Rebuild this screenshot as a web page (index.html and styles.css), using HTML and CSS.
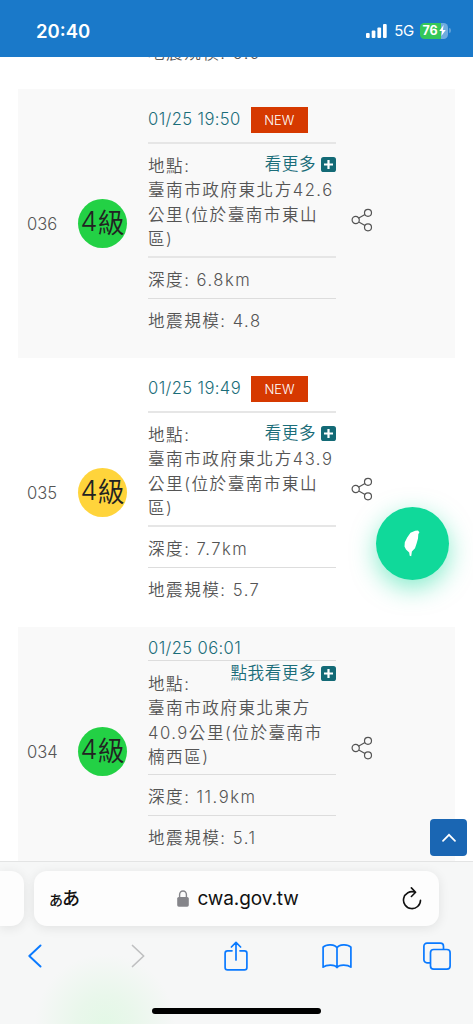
FILE: index.html
```html
<!DOCTYPE html>
<html lang="zh-Hant">
<head>
<meta charset="utf-8">
<title>cwa.gov.tw</title>
<link rel="stylesheet" href="styles.css">
</head>
<body>
<svg width="0" height="0" class="defs">
  <symbol id="plus" viewBox="0 0 15 15"><rect width="15" height="15" rx="2.6" fill="#136a76"/><path d="M7.5 3v9M3 7.5h9" stroke="#fff" stroke-width="2.2"/></symbol>
  <symbol id="share" viewBox="0 0 22 24"><g fill="none" stroke="#555" stroke-width="1.2"><circle cx="4.7" cy="12" r="3.6"/><circle cx="17" cy="4.8" r="3.5"/><circle cx="17" cy="19.3" r="3.5"/><path d="M7.8 10.1l6.2-3.6M7.8 13.9l6.2 3.6"/></g></symbol>
</svg>
<div class="screen">
  <header class="status">
    <span class="clock">20:40</span>
    <div class="indicators">
      <svg class="signal" width="21" height="14" viewBox="0 0 21 14" fill="#fff"><rect x="0" y="9" width="3.7" height="5" rx="1"/><rect x="5.7" y="6.5" width="3.7" height="7.5" rx="1"/><rect x="11.4" y="3.6" width="3.7" height="10.4" rx="1"/><rect x="17" y="0" width="3.7" height="14" rx="1"/></svg>
      <span class="network">5G</span>
      <div class="battery"><span>76</span><svg width="7" height="11" viewBox="0 0 7 11"><path d="M4.6 0L.3 6h2.8L2.4 11 6.7 4.9H3.9z" fill="#fff"/></svg></div>
      <i class="cap"></i>
    </div>
  </header>

  <main class="list">
    <div class="tail"><p>地震規模: <b>5.9</b></p></div>

    <section class="quake shaded">
      <span class="no">036</span>
      <span class="level green"><b>4</b>級</span>
      <div class="detail">
        <div class="date"><span>01/25 19:50</span><em>NEW</em></div>
        <div class="place">
          <div class="head"><span>地點:</span><a class="more">看更多<svg width="15" height="15"><use href="#plus"/></svg></a></div>
          臺南市政府東北方<b>42.6</b><br>公里(位於臺南市東山<br>區)
        </div>
        <div class="depth">深度: <b>6.8km</b></div>
        <div class="scale">地震規模: <b>4.8</b></div>
      </div>
      <svg class="share" width="22" height="24"><use href="#share"/></svg>
    </section>

    <section class="quake">
      <span class="no">035</span>
      <span class="level yellow"><b>4</b>級</span>
      <div class="detail">
        <div class="date"><span>01/25 19:49</span><em>NEW</em></div>
        <div class="place">
          <div class="head"><span>地點:</span><a class="more">看更多<svg width="15" height="15"><use href="#plus"/></svg></a></div>
          臺南市政府東北方<b>43.9</b><br>公里(位於臺南市東山<br>區)
        </div>
        <div class="depth">深度: <b>7.7km</b></div>
        <div class="scale">地震規模: <b>5.7</b></div>
      </div>
      <svg class="share" width="22" height="24"><use href="#share"/></svg>
    </section>

    <section class="quake shaded older">
      <span class="no">034</span>
      <span class="level green"><b>4</b>級</span>
      <div class="detail">
        <div class="date"><span>01/25 06:01</span></div>
        <div class="place">
          <div class="head"><span>地點:</span><a class="more">點我看更多<svg width="15" height="15"><use href="#plus"/></svg></a></div>
          臺南市政府東北東方<br><b>40.9</b>公里(位於臺南市<br>楠西區)
        </div>
        <div class="depth">深度: <b>11.9km</b></div>
        <div class="scale">地震規模: <b>5.1</b></div>
      </div>
      <svg class="share" width="22" height="24"><use href="#share"/></svg>
    </section>
  </main>

  <a class="fab"><svg width="16" height="27" viewBox="0 0 16 27"><path d="M11.2.8L14 .6 15.4 2.2 14.3 4.3 14 8.4 12.6 13.6 11 18.2 7.900 21.4 7.200 26.2 5.700 25.8 5.200 22.4 2 19.6 .5 16.600 .8 12.200 3.2 7.500 6.5 2.8z" fill="#fff"/></svg></a>
  <a class="top"><svg width="14" height="9" viewBox="0 0 14 9"><path d="M1 7.8L7 1.8l6 6" fill="none" stroke="#fff" stroke-width="1.7" stroke-linecap="round"/></svg></a>

  <footer class="chrome">
    <div class="tabs">
      <div class="prev"></div>
      <div class="address">
        <span class="reader"><small>あ</small>あ</span>
        <div class="url">
          <svg width="12" height="17" viewBox="0 0 12 17"><rect x=".2" y="7" width="11.6" height="9.7" rx="1.6" fill="#85858a"/><path d="M2.6 7.5V4.6a3.4 3.6 0 0 1 6.8 0v2.9" fill="none" stroke="#85858a" stroke-width="1.4"/></svg>
          <span>cwa.gov.tw</span>
        </div>
        <svg class="reload" width="20" height="24" viewBox="0 0 20 24" fill="none" stroke="#111" stroke-width="1.6" stroke-linecap="round" stroke-linejoin="round"><path d="M12.8 5.1A8.5 8.5 0 1 0 18.5 13.2M9.4.9l4.2 4.3-4.2 4.3"/></svg>
      </div>
    </div>
    <nav class="tools">
      <span><svg width="14" height="24" viewBox="0 0 14 24" fill="none" stroke="#0a7aff" stroke-width="1.9" stroke-linecap="round" stroke-linejoin="round"><path d="M12.5 1.5L1.3 12l11.2 10.5"/></svg></span>
      <span class="forward"><svg width="14" height="24" viewBox="0 0 14 24" fill="none" stroke="#bfc0c1" stroke-width="1.7" stroke-linecap="round" stroke-linejoin="round"><path d="M1.5 1.5l11.2 10.5L1.5 22.5"/></svg></span>
      <span><svg width="24" height="30" viewBox="0 0 24 30" fill="none" stroke="#0a7aff" stroke-width="1.7" stroke-linecap="round" stroke-linejoin="round"><path d="M8 9.8H3.5a2.4 2.4 0 0 0-2.4 2.4v14.2a2.4 2.4 0 0 0 2.4 2.4h17a2.4 2.4 0 0 0 2.4-2.4V12.2a2.4 2.4 0 0 0-2.4-2.4H16M12 19V1.7M7.4 6L12 1.4 16.6 6"/></svg></span>
      <span><svg width="30" height="26" viewBox="0 0 30 26" fill="none" stroke="#0a7aff" stroke-width="1.7" stroke-linejoin="round"><path d="M15 4.8C13 1.2 4.5.6 1.1 4.2V24.2C4.5 21.4 13 21.3 15 24.6 17 21.3 25.5 21.4 28.9 24.2V4.2C25.5.6 17 1.2 15 4.8zM15 4.8v19.8"/></svg></span>
      <span><svg width="28" height="28" viewBox="0 0 28 28" fill="none" stroke="#0a7aff" stroke-width="1.7"><rect x="7.5" y="7.5" width="19.6" height="19.6" rx="3.2"/><path d="M7.5 20.8H4a3.1 3.1 0 0 1-3.1-3.1V4.2A3.1 3.1 0 0 1 4 1.1h13.4a3.1 3.1 0 0 1 3.1 3.1v3.3"/></svg></span>
    </nav>
    <div class="home"></div>
  </footer>
</div>
</body>
</html>
```
FILE: styles.css
```css
* { box-sizing: border-box; }
body { margin: 0; }
b, em { font-weight: inherit; font-style: normal; }
svg { flex: none; display: block; }
.defs { position: absolute; }
.screen {
  position: relative;
  width: 473px;
  height: 1024px;
  display: flex;
  flex-direction: column;
  overflow: hidden;
  background: #fff;
  font-family: Inter, "Noto Sans CJK TC", sans-serif;
  font-weight: 350;
  font-size: 16.6px;
  color: #555;
}
.status {
  height: 57px;
  flex: none;
  background: #1a79c9;
  color: #fff;
  display: flex;
  justify-content: space-between;
  align-items: center;
  padding: 4px 22px 0 36px;
}
.clock { font-size: 18.5px; font-weight: 600; }
.indicators { display: flex; align-items: center; }
.network { font-size: 15px; font-weight: 400; margin: 0 6px 0 7px; letter-spacing: -.3px; }
.battery {
  width: 28px;
  height: 16px;
  border-radius: 4.5px;
  background: linear-gradient(90deg, #34c759 76%, #6fabdf 76%);
  display: flex;
  align-items: center;
  justify-content: center;
  gap: 1px;
  font-size: 12.5px;
  font-weight: 700;
}
.cap { width: 2px; height: 5px; margin-left: 1px; border-radius: 0 2px 2px 0; background: #5c9fd8; }
.list { flex: none; height: 804px; overflow: hidden; }
.tail { display: flex; height: 32px; padding-left: 148px; letter-spacing: 1.5px; }
.tail p { margin: -16px 0 0; line-height: 24px; height: 24px; }
.quake {
  height: 269px;
  margin: 0 18px;
  display: flex;
  align-items: center;
}
.shaded { background: #f9f9f9; }
.no { width: 60px; padding-left: 9px; }
.level {
  width: 49px;
  height: 49px;
  flex: none;
  border-radius: 50%;
  display: flex;
  align-items: center;
  justify-content: center;
  padding-bottom: 4px;
  font-size: 27px;
  color: #222;
}
.green { background: #23d145; }
.yellow { background: #ffd43b; }
.detail { width: 188px; height: 100%; margin-left: 21px; letter-spacing: 1.5px; white-space: nowrap; }
.date {
  height: 55px;
  padding-top: 6px;
  border-bottom: 2px solid #e6e6e6;
  display: flex;
  align-items: center;
  gap: 10px;
  color: #1a6d79;
  letter-spacing: .38px;
}
.date em {
  width: 57px;
  height: 26px;
  margin-top: 3px;
  background: #d63900;
  color: #fff;
  font-size: 13px;
  letter-spacing: 0;
  line-height: 26px;
  text-align: center;
}
.place { height: 114px; padding-top: 10px; border-bottom: 2px solid #e6e6e6; line-height: 24.3px; }
.head { display: flex; justify-content: space-between; height: 24.3px; }
.more { display: flex; align-items: center; gap: 5px; height: 24px; margin-top: -2px; color: #1a6d79; letter-spacing: .5px; }
.depth { height: 41px; border-bottom: 1px solid #ddd; line-height: 45px; }
.scale { line-height: 45px; }
.share { margin: -8px 0 0 15px; }
.older { height: 249px; }
.older .date { height: 34px; padding-top: 8px; border-bottom: 1px solid #ddd; }
.older .place { padding-top: 11px; border-bottom: 1px solid #ddd; }
.older .more { margin-top: -11px; }
.fab {
  position: absolute;
  left: 376px;
  top: 507px;
  width: 73px;
  height: 73px;
  border-radius: 50%;
  background: #10d99a;
  box-shadow: 0 8px 24px rgba(16, 217, 154, .5);
  display: flex;
  align-items: center;
  justify-content: center;
  padding-right: 2px;
}
.top {
  position: absolute;
  left: 430px;
  top: 819px;
  width: 37px;
  height: 37px;
  border-radius: 4px;
  background: #1a66b3;
  display: flex;
  align-items: center;
  justify-content: center;
}
.chrome {
  height: 163px;
  flex: none;
  border-top: 1px solid #e3e4e4;
  background: radial-gradient(circle at 105px 162px, #e3f8e6 0, #e9f7eb 28px, rgba(246, 247, 247, 0) 70px), #f6f7f7;
}
.tabs { display: flex; gap: 10px; padding-top: 9px; }
.prev, .address { height: 55px; background: #fdfdfd; box-shadow: 0 2px 12px rgba(0, 0, 0, .09); }
.prev { width: 24px; border-radius: 0 13px 13px 0; }
.address {
  width: 405px;
  border-radius: 13px;
  display: flex;
  align-items: center;
  justify-content: space-between;
  padding: 0 17px 0 15px;
  color: #111;
  font-weight: 400;
}
.reader { font-family: "Noto Sans CJK JP", sans-serif; font-size: 18px; font-weight: 500; width: 28px; margin-top: -3px; white-space: nowrap; letter-spacing: -1px; }
.reader small { font-size: 14px; }
.url { display: flex; align-items: center; gap: 8px; margin-left: -3px; font-size: 19px; letter-spacing: -.1px; }
.tools {
  display: flex;
  align-items: center;
  justify-content: space-between;
  height: 30px;
  margin-top: 15px;
  padding: 0 21px 0 20px;
}
.tools span { width: 30px; display: flex; justify-content: center; }
.tools .forward { padding-left: 5px; }
.home { width: 169px; height: 6px; border-radius: 3px; margin: 37px auto 0; background: #000; }
```
